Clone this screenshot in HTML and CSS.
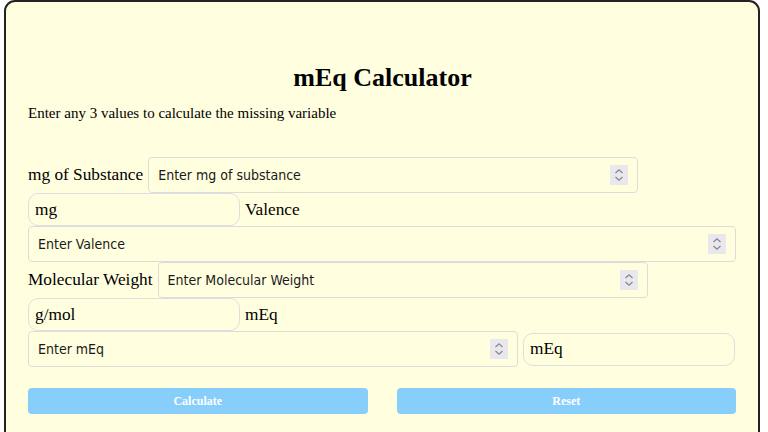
FILE: index.html
```html
<!DOCTYPE html>
<html lang="en">
<head>
<meta charset="utf-8">
<title>mEq Calculator</title>
<link rel="stylesheet" href="styles.css">
</head>
<body>
<main class="card">
  <h1 class="title">mEq Calculator</h1>
  <p class="intro">Enter any 3 values to calculate the missing variable</p>
  <form class="form">
    <label class="label" for="mg">mg of Substance</label>
    <div class="field w490">
      <input class="num" id="mg" type="number" placeholder="Enter mg of substance">
      <span class="spin"><svg width="18" height="20" viewBox="0 0 18 20"><path d="M5.5 8 L9 4.8 L12.5 8 M5.5 12 L9 15.2 L12.5 12" fill="none" stroke="#85858f" stroke-width="1.2"/></svg></span>
    </div>
    <input class="unit" type="text" value="mg" readonly>
    <label class="label" for="val">Valence</label>
    <div class="field wfull">
      <input class="num" id="val" type="number" placeholder="Enter Valence">
      <span class="spin"><svg width="18" height="20" viewBox="0 0 18 20"><path d="M5.5 8 L9 4.8 L12.5 8 M5.5 12 L9 15.2 L12.5 12" fill="none" stroke="#85858f" stroke-width="1.2"/></svg></span>
    </div>
    <label class="label" for="mw">Molecular Weight</label>
    <div class="field w490">
      <input class="num" id="mw" type="number" placeholder="Enter Molecular Weight">
      <span class="spin"><svg width="18" height="20" viewBox="0 0 18 20"><path d="M5.5 8 L9 4.8 L12.5 8 M5.5 12 L9 15.2 L12.5 12" fill="none" stroke="#85858f" stroke-width="1.2"/></svg></span>
    </div>
    <input class="unit" type="text" value="g/mol" readonly>
    <label class="label" for="meq">mEq</label>
    <div class="field w490">
      <input class="num" id="meq" type="number" placeholder="Enter mEq">
      <span class="spin"><svg width="18" height="20" viewBox="0 0 18 20"><path d="M5.5 8 L9 4.8 L12.5 8 M5.5 12 L9 15.2 L12.5 12" fill="none" stroke="#85858f" stroke-width="1.2"/></svg></span>
    </div>
    <input class="unit" type="text" value="mEq" readonly>
  </form>
  <div class="actions">
    <button class="btn" type="button">Calculate</button>
    <button class="btn" type="button">Reset</button>
  </div>
</main>
</body>
</html>
```
FILE: styles.css
```css
html, body {
  margin: 0;
  padding: 0;
  background: #ffffff;
}
body {
  font-family: "Liberation Serif", "Times New Roman", serif;
  color: #000;
}
.card {
  box-sizing: border-box;
  width: 756px;
  min-height: 450px;
  margin: 0 0 0 4px;
  padding: 60px 21px 20px 22px;
  background: #ffffe0;
  border: 2px solid #222;
  border-radius: 11px;
}
.title {
  margin: 0;
  font-size: 26px;
  line-height: 32px;
  font-weight: bold;
  text-align: center;
}
.intro {
  margin: 9px 0 0;
  font-size: 15px;
  line-height: 20px;
}
.form {
  display: flex;
  flex-wrap: wrap;
  align-items: center;
  column-gap: 5px;
  row-gap: 0;
  margin-top: 34px;
  width: 708px;
}
.label {
  font-size: 17.3px;
  line-height: 20px;
}
.field {
  box-sizing: border-box;
  height: 36px;
  display: flex;
  align-items: center;
  padding: 0 9px 0 9px;
  border: 1px solid #dcdcd8;
  border-radius: 4px;
}
.w490 { width: 490px; }
.wfull { width: 708px; }
.num {
  flex: 1;
  min-width: 0;
  border: 0;
  outline: none;
  padding: 0;
  margin: 0;
  background: transparent;
  font-family: "DejaVu Sans Condensed", "Liberation Sans", Arial, sans-serif;
  font-stretch: condensed;
  font-size: 14px;
  color: #1a1a1a;
  -moz-appearance: textfield;
}
.num::placeholder {
  color: #1a1a1a;
  opacity: 1;
}
.num::-webkit-inner-spin-button,
.num::-webkit-outer-spin-button {
  -webkit-appearance: none;
  margin: 0;
}
.spin {
  display: block;
  width: 18px;
  height: 20px;
  background: #e9e9ed;
}
.spin svg {
  display: block;
}
.unit {
  box-sizing: border-box;
  width: 212px;
  height: 33px;
  margin: 0;
  padding: 0 6px;
  border: 1px solid #dcdfe2;
  border-radius: 10px;
  background: transparent;
  font-family: "Liberation Serif", "Times New Roman", serif;
  font-size: 17.3px;
  color: #000;
  outline: none;
}
.actions {
  display: grid;
  grid-template-columns: 1fr 1fr;
  column-gap: 29px;
  width: 708px;
  margin-top: 21px;
}
.btn {
  height: 26px;
  border: 0;
  border-radius: 4px;
  background: #87cefa;
  color: #ffffff;
  font-family: "Liberation Serif", "Times New Roman", serif;
  font-size: 12px;
  font-weight: bold;
  padding: 0;
}
```
